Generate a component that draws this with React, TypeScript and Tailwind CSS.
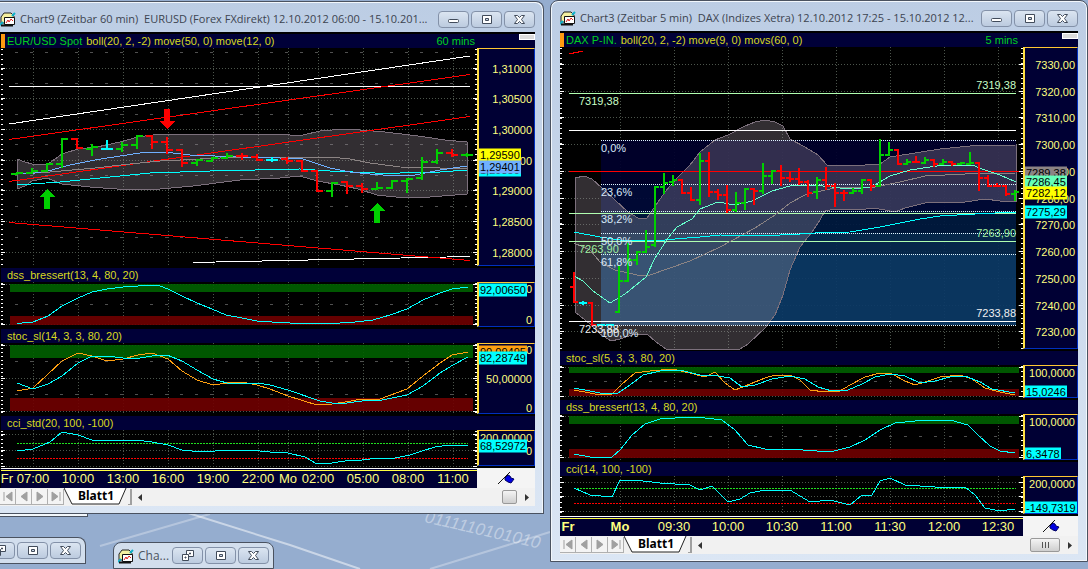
import React from 'react';

type Bar = [x: number, high: number, low: number, open: number, close: number, color: 'g' | 'r' | 'c'];
type AxisItem = { y: number; text: string; tag?: string };

const barColors = { g: '#00d000', r: '#ff0000', c: '#00ffff' };

const eurBars: Bar[] = [
  [17, 173, 175, 174, 173, 'g'], [32, 168, 174, 173, 171, 'g'], [47, 163, 171, 171, 164, 'g'],
  [62, 138, 168, 164, 139, 'g'], [77, 139, 149, 139, 148, 'r'], [92, 144, 156, 149, 147, 'g'],
  [107, 140, 150, 149, 149, 'c'], [122, 142, 152, 149, 145, 'g'], [137, 135, 149, 145, 136, 'g'],
  [152, 136, 149, 136, 142, 'r'], [167, 137, 154, 142, 150, 'r'], [182, 150, 167, 150, 163, 'r'],
  [197, 160, 166, 163, 160, 'g'], [212, 157, 162, 161, 158, 'g'], [227, 153, 159, 158, 156, 'g'],
  [242, 153, 160, 156, 156, 'r'], [257, 154, 161, 157, 160, 'r'], [272, 157, 162, 160, 160, 'c'],
  [287, 157, 164, 159, 161, 'r'], [302, 160, 171, 161, 171, 'r'], [317, 171, 191, 171, 191, 'r'],
  [332, 182, 197, 191, 183, 'g'], [347, 182, 194, 182, 186, 'r'], [362, 183, 193, 186, 189, 'r'],
  [377, 182, 190, 189, 188, 'g'], [392, 181, 188, 188, 181, 'g'], [407, 179, 193, 181, 179, 'g'],
  [422, 157, 180, 178, 162, 'g'], [437, 149, 164, 162, 153, 'g'], [452, 149, 157, 153, 155, 'r'],
  [467, 153, 157, 155, 155, 'g'],
];

const daxBars: Bar[] = [
  [574, 272, 302, 287, 302, 'r'], [583, 301, 305, 303, 303, 'c'], [592, 302, 325, 303, 325, 'r'],
  [601, 324, 326, 325, 325, 'c'], [610, 324, 326, 325, 325, 'c'], [619, 265, 313, 312, 281, 'g'],
  [628, 243, 281, 281, 260, 'g'], [637, 251, 265, 260, 252, 'g'], [646, 230, 252, 252, 247, 'g'],
  [655, 186, 247, 245, 187, 'g'], [664, 173, 194, 187, 183, 'g'], [673, 175, 186, 182, 180, 'g'],
  [682, 180, 193, 180, 193, 'r'], [691, 187, 201, 193, 200, 'r'], [700, 153, 205, 200, 161, 'g'],
  [709, 152, 197, 161, 192, 'r'], [718, 189, 200, 192, 195, 'r'], [727, 185, 213, 195, 210, 'r'],
  [736, 192, 212, 210, 203, 'g'], [745, 188, 210, 203, 189, 'g'], [754, 188, 205, 189, 191, 'r'],
  [763, 163, 194, 191, 176, 'g'], [772, 170, 184, 176, 171, 'g'], [781, 165, 186, 171, 178, 'r'],
  [790, 172, 182, 178, 179, 'r'], [799, 168, 185, 179, 182, 'r'], [808, 180, 197, 182, 193, 'r'],
  [817, 177, 199, 192, 180, 'g'], [826, 167, 190, 180, 186, 'r'], [835, 183, 207, 186, 193, 'r'],
  [844, 190, 201, 193, 193, 'r'], [853, 188, 194, 193, 191, 'g'], [862, 180, 194, 191, 180, 'g'],
  [871, 179, 191, 180, 186, 'r'], [880, 139, 186, 186, 155, 'g'], [889, 142, 156, 155, 150, 'g'],
  [898, 150, 165, 150, 164, 'r'], [907, 159, 165, 164, 162, 'g'], [916, 156, 163, 162, 162, 'r'],
  [925, 157, 164, 163, 160, 'g'], [934, 159, 167, 160, 164, 'r'], [943, 159, 165, 164, 162, 'g'],
  [952, 161, 166, 162, 164, 'r'], [961, 162, 165, 164, 163, 'g'], [970, 152, 165, 164, 163, 'g'],
  [979, 162, 191, 163, 178, 'r'], [988, 175, 186, 178, 186, 'r'], [997, 183, 187, 186, 186, 'r'],
  [1006, 185, 196, 186, 194, 'r'], [1015, 190, 201, 194, 192, 'g'],
];

const eurHours = [33, 78, 123, 168, 213, 258, 288, 318, 363, 408, 453];
const daxHours = [620, 674, 728, 782, 836, 890, 944, 998];

const eurTimes = [
  { x: 7, text: 'Fr' }, { x: 33, text: '07:00' }, { x: 78, text: '10:00' }, { x: 123, text: '13:00' },
  { x: 168, text: '16:00' }, { x: 213, text: '19:00' }, { x: 258, text: '22:00' }, { x: 288, text: 'Mo' },
  { x: 318, text: '02:00' }, { x: 363, text: '05:00' }, { x: 408, text: '08:00' }, { x: 453, text: '11:00' },
];

const daxTimes = [
  { x: 568, text: 'Fr', bold: true }, { x: 620, text: 'Mo', bold: true }, { x: 674, text: '09:30' },
  { x: 728, text: '10:00' }, { x: 782, text: '10:30' }, { x: 836, text: '11:00' },
  { x: 890, text: '11:30' }, { x: 944, text: '12:00' }, { x: 998, text: '12:30' },
];

const fibs = [
  { y: 140, h: 44, fill: '#00002c' }, { y: 184, h: 27, fill: '#000a38' }, { y: 211, h: 22, fill: '#001a40' },
  { y: 233, h: 21, fill: '#062a50' }, { y: 254, h: 71, fill: '#0b3966' },
];

type PlotProps = {
  x: number; y: number; w: number; h: number;
  cols: number[]; rows: number[]; minor?: number[]; step?: number;
  children: React.ReactNode;
};

function Plot({ x, y, w, h, cols, rows, minor = [], step = 5, children }: PlotProps) {
  const bottom = y + h - 2;
  return (
    <svg
      viewBox={`${x} ${y} ${w} ${h}`}
      height={h}
      preserveAspectRatio="none"
      shapeRendering="crispEdges"
      fill="none"
      className="block w-0 min-w-0 flex-1 bg-black [&_*]:[vector-effect:non-scaling-stroke]"
    >
      <g stroke="#4c554c" strokeDasharray="1 2">
        {cols.map((c) => <line key={c} x1={c + 0.5} x2={c + 0.5} y1={y} y2={bottom} />)}
        {rows.map((r) => <line key={r} x1={x + 5} x2={x + w - 4} y1={r + 0.5} y2={r + 0.5} />)}
      </g>
      {minor.map((r) => (
        <line key={r} x1={x + 14} x2={x + w - 10} y1={r + 0.5} y2={r + 0.5} stroke="#505050" strokeDasharray="3 12" />
      ))}
      {children}
      <g stroke="#ffffff">
        <line x1={x + 1} x2={x + 1} y1={y + 1} y2={bottom} strokeWidth="2" strokeDasharray={`1 ${step - 1}`} />
        <line x1={x + w - 1} x2={x + w - 1} y1={y + 1} y2={bottom} strokeWidth="2" strokeDasharray={`1 ${step - 1}`} />
        {rows.map((r) => (
          <path key={r} d={`M${x} ${r + 0.5}h4M${x + w - 4} ${r + 0.5}h4`} />
        ))}
      </g>
    </svg>
  );
}

function Curve({ points, color }: { points: string; color: string }) {
  return <polyline points={points} stroke={color} />;
}

function Bars({ bars, tick }: { bars: Bar[]; tick: number }) {
  return (
    <g strokeWidth="2">
      {bars.map(([x, high, low, open, close, color]) => (
        <path key={x} d={`M${x} ${high}V${low}M${x - tick} ${open}H${x + 1}M${x - 1} ${close}H${x + tick}`} stroke={barColors[color]} />
      ))}
    </g>
  );
}

function Axis({ y, items, className }: { y: number; items: AxisItem[]; className: string }) {
  return (
    <div className={`shrink-0 bg-black pb-0.5 ${className}`}>
      <div className="relative h-full overflow-hidden border-t border-r border-b border-l-2 border-t-[#ffc832] border-r-[#0030c0] border-b-[#0030c0] border-l-[#ffe040] bg-[#000034] font-['Liberation_Sans',sans-serif] text-[11px] leading-[13px] text-[#ffff80]">
        {items.map((item) => (
          <span
            key={item.y}
            style={{ top: item.y - y - 1 }}
            className={`absolute -translate-y-1/2 ${item.tag ? `left-0 px-px text-black ${item.tag}` : 'right-0.5'}`}
          >
            {item.text}
          </span>
        ))}
      </div>
    </div>
  );
}

function IndicatorTitle({ children }: { children: React.ReactNode }) {
  return (
    <h3 className="h-[14px] bg-[#000038] pl-1.5 font-['Liberation_Sans',sans-serif] text-[11px] leading-[14px] whitespace-pre text-[#d8d820]">
      {children}
    </h3>
  );
}

function ChartHeader({ name, studies, span }: { name: string; studies: string; span: string }) {
  return (
    <div className="flex h-[14px] items-start bg-[#000038] font-['Liberation_Sans',sans-serif] text-[11px] leading-[14px]">
      <span className="mr-0.5 h-full w-1 bg-[#ff9a10]" />
      <span className="mr-1 text-[#00d020]">{name}</span>
      <span className="flex-1 truncate text-[#d8d820]">{studies}</span>
      <span className="mr-11 text-[#00d020]">{span}</span>
      <button aria-label="Leiste" className="h-1.5 w-4 border border-white bg-[#dcdcdc]" />
    </div>
  );
}

function AppIcon() {
  return (
    <svg width="16" height="16" viewBox="0 0 16 16" className="shrink-0">
      <path d="M1 12V6l3-4h7l3 3v7Z" fill="#f4f0a0" stroke="#222" />
      <path d="M0 14 3 11M12 5l3-3" stroke="#10b0c8" strokeWidth="2" />
      <path d="M4.500 6.500h10v7h-10Z" fill="#fff" stroke="#111" />
      <path d="m6 12 2-3 1 2 2-3 2 2" fill="none" stroke="#e02020" />
      <path d="M1 14.500h12" stroke="#111" strokeWidth="2" />
    </svg>
  );
}

function CaptionButton({ kind }: { kind: 'Minimieren' | 'Maximieren' | 'Wiederherstellen' | 'Schließen' }) {
  return (
    <button
      aria-label={kind}
      className="flex h-[17px] w-[31px] shrink-0 items-center justify-center rounded-sm border border-[#8391a8] bg-linear-to-b from-[#dbe5f1] to-[#bccbdf]"
    >
      <svg width="13" height="11" viewBox="0 0 13 11" fill="#fff" stroke="#414b5a">
        {kind === 'Minimieren' && <rect x="1.500" y="5.500" width="10" height="3" rx="1" />}
        {kind === 'Maximieren' && <path d="M2.500 1.500h9v8h-9ZM5.500 4.500h3v2h-3Z" fillRule="evenodd" />}
        {kind === 'Wiederherstellen' && (
          <>
            <path d="M5.500.5h7v6h-7ZM8.500 3h1v1h-1Z" fillRule="evenodd" />
            <path d="M1.500 4.500h6v6h-6ZM4 7h1v1H4Z" fillRule="evenodd" />
          </>
        )}
        {kind === 'Schließen' && <path d="M1.500 1.500h3l2 2 2-2h3L8.500 5.500l3 4h-3l-2-2-2 2h-3l3-4Z" />}
      </svg>
    </button>
  );
}

function TitleBar({ title }: { title: string }) {
  return (
    <header className="flex h-[30px] items-center gap-0.5 pt-1">
      <AppIcon />
      <h2 className="min-w-0 flex-1 truncate pl-0.5 font-['Open_Sans','Noto_Sans',sans-serif] text-[11px] leading-4 whitespace-pre text-[#3c4450]">
        {title}
      </h2>
      <CaptionButton kind="Minimieren" />
      <CaptionButton kind="Maximieren" />
      <CaptionButton kind="Schließen" />
    </header>
  );
}

function TimeAxis({ x, w, times, className }: { x: number; w: number; times: { x: number; text: string; bold?: boolean }[]; className: string }) {
  return (
    <div className="flex h-5 bg-[#f4f4f4]">
      <div className="relative flex-1 border-t border-white bg-[#000034] font-['Liberation_Sans',sans-serif] text-[13px] leading-4 text-[#ffff80]">
        <div className="mt-px h-px bg-[#ffff40]" />
        {times.map((t) => (
          <span
            key={t.text}
            style={{ left: `${((t.x - x) / w) * 100}%` }}
            className={t.bold ? 'absolute top-0.5 -translate-x-1/2 font-bold' : 'absolute top-0.5 -translate-x-1/2'}
          >
            {t.text}
          </span>
        ))}
      </div>
      <div className={`flex shrink-0 items-center justify-center ${className}`}>
        <svg width="18" height="14" viewBox="0 0 18 14">
          <path d="M1 13 13 1" stroke="#111" />
          <path d="m8 7 3-3 2 1 1 2 3 1-3 4-3-1-3-2Z" fill="#0000e0" stroke="#000060" />
        </svg>
      </div>
    </div>
  );
}

const navIcons = [
  { label: 'Erstes Blatt', d: 'M3 2v9M11 2v9L5 6.500Z' },
  { label: 'Vorheriges Blatt', d: 'M10 2v9L4 6.500Z' },
  { label: 'Nächstes Blatt', d: 'M4 2v9l6-4.500Z' },
  { label: 'Letztes Blatt', d: 'M3 2v9l6-4.500ZM11 2v9' },
];

function SheetTabs({ grip }: { grip?: boolean }) {
  return (
    <nav className="flex h-[18px] items-center bg-[#f1f1f1]">
      {navIcons.map((n) => (
        <button key={n.label} aria-label={n.label} className="flex h-4 w-4 items-center justify-center border-r border-b border-[#b0b0b0] bg-[#f4f4f4]">
          <svg width="14" height="13" viewBox="0 0 14 13" fill="#a0a0a0" stroke="#a0a0a0">
            <path d={n.d} />
          </svg>
        </button>
      ))}
      <button className="relative flex h-full w-[64px] items-start justify-center font-['Noto_Sans','Open_Sans',sans-serif] text-[12px] leading-4 font-bold text-black">
        <svg width="64" height="18" viewBox="0 0 64 18" className="absolute inset-0">
          <path d="M0 0 8 16H55L62 0" fill="#fff" stroke="#222" />
        </svg>
        <span className="relative">Blatt1</span>
      </button>
      <span className="h-4 w-1 border-r-2 border-b border-[#a0a0a0]" />
      <svg width="8" height="9" viewBox="0 0 8 9" className="ml-1"><path d="M6 1v7L2 4.500Z" fill="#333" /></svg>
      <div className="flex flex-1 justify-end">
        <div className={grip
          ? 'flex h-[14px] w-[30px] items-center justify-center gap-0.5 rounded-xs border border-[#999] bg-linear-to-b from-[#f4f4f4] to-[#cfcfcf]'
          : 'h-[14px] w-[15px] rounded-xs border border-[#999] bg-linear-to-b from-[#f4f4f4] to-[#cfcfcf]'}
        >
          {grip && [0, 1, 2].map((i) => <span key={i} className="h-1.5 w-px bg-[#555]" />)}
        </div>
      </div>
      <svg width="8" height="9" viewBox="0 0 8 9" className="mr-1 ml-1.5"><path d="M2 1v7l4-3.500Z" fill="#333" /></svg>
    </nav>
  );
}

const band = { fill: '#a498a6', fillOpacity: 0.3, stroke: '#7c707c' };

function EurUsdWindow() {
  const x = 1;
  const w = 476;
  return (
    <section className="mt-px w-1/2 rounded-tr-lg border-t border-r border-b border-[#4a5260] bg-linear-to-b from-[#bccde4] to-[#dbe6f4] pr-2 pb-[7px] shadow-[inset_-1px_1px_0_#f2f7fc]">
      <TitleBar title={'Chart9 (Zeitbar 60 min)  EURUSD (Forex FXdirekt) 12.10.2012 06:00 - 15.10.201...'} />
      <div className="border-t-2 border-l border-black bg-black">
        <ChartHeader name="EUR/USD Spot" studies="boll(20, 2, -2) move(50, 0) move(12, 0)" span="60 mins" />
        <div className="flex">
          <Plot x={x} y={48} w={w} h={220} cols={eurHours} rows={[68, 98, 129, 160, 190, 221, 252]} minor={[52, 83, 114, 144, 175, 206, 237]}>
            <polygon
              {...band}
              points="17,159 25,162 32,164 48,164 62,154 78,149 97,147 120,142 138,137 160,134 280,134 290,135 303,135 320,131 345,129 360,130 385,132 410,135 425,137 445,140 467,142 467,194 430,197 405,198 377,195 358,189 340,185 317,181 300,176 280,178 240,180 193,186 160,189 130,190 90,187 62,184 47,178 32,181 25,186 17,189"
            />
            <path d="M9 86.500H470M9 124 470 56M193 262.500 470 256.500" stroke="#fff" />
            <path d="M9 139.500 470 74.500M9 181.500 470 116.500M9 222.500 470 260.500" stroke="#f00" />
            <Curve color="#8c8484" points="17,174 50,172 95,168 130,164 160,161 200,159 240,157 330,157 350,159 370,163 400,167 440,168 467,168" />
            <Curve color="#00ffff" points="17,185 60,182 100,178 150,173 210,171 300,169 330,171 375,173 400,173 425,172 440,172 467,170" />
            <Curve color="#6fb0ff" points="17,174 35,173 48,171 70,165 95,160 120,156 140,153 165,152 190,155 240,157 280,158 300,158 315,163 330,168 350,172 370,174 395,176 415,175 440,170 467,166" />
            <Bars bars={eurBars} tick={6} />
            <path d="M164 109h6v12h5l-8 8-8-8h5Z" fill="#f00" />
            <path d="M47 189l8 8h-5v12h-6v-12h-5ZM377 203l8 8h-5v12h-6v-12h-5Z" fill="#00d000" />
          </Plot>
          <Axis
            y={48}
            className="w-[58px]"
            items={[
              { y: 69, text: '1,31000' }, { y: 99, text: '1,30500' }, { y: 130, text: '1,30000' },
              { y: 161, text: '1,29500' }, { y: 191, text: '1,29000' }, { y: 222, text: '1,28500' },
              { y: 253, text: '1,28000' }, { y: 170, text: '1,29350', tag: 'bg-[#00ffff]' },
              { y: 155, text: '1,29590', tag: 'bg-[#ffff00]' }, { y: 167, text: '1,29401', tag: 'bg-[#6fb0ff]' },
            ]}
          />
        </div>
        <IndicatorTitle>dss_bressert(13, 4, 80, 20)</IndicatorTitle>
        <div className="flex">
          <Plot x={x} y={282} w={w} h={47} cols={eurHours} rows={[284, 324]} minor={[304]} step={4}>
            <path d="M10 284h463v8H10Z" fill="#006000" fillOpacity="0.9" />
            <path d="M10 316h463v9H10Z" fill="#700000" fillOpacity="0.9" />
            <Curve color="#00ffff" points="17,323.500 33,322 48,316 62,306 78,298 92,292 107,289 123,287 138,286 152,285 160,286 168,289 182,296 197,303 212,309 226,315 242,318 257,321 272,322 290,323 320,324 340,323 355,322 373,320 390,315 407,309 423,300 440,293 452,289 468,287" />
          </Plot>
          <Axis
            y={282}
            className="w-[58px]"
            items={[{ y: 289, text: '100,00000' }, { y: 320, text: '0' }, { y: 290, text: '92,00650', tag: 'bg-[#00ffff]' }]}
          />
        </div>
        <IndicatorTitle>stoc_sl(14, 3, 3, 80, 20)</IndicatorTitle>
        <div className="flex">
          <Plot x={x} y={343} w={w} h={73} cols={eurHours} rows={[345, 378, 411]} minor={[361, 394]} step={4}>
            <path d="M10 345h463v13H10Z" fill="#006000" fillOpacity="0.9" />
            <path d="M10 398h463v13H10Z" fill="#700000" fillOpacity="0.9" />
            <Curve color="#ffa010" points="17,391 33,388 62,361 78,353 92,356 107,361 123,359 138,355 152,353 160,356 168,359 182,371 197,380 213,385 227,383 242,382 257,385 270,389 288,396 317,405 332,404 345,402 362,399 380,399 407,389 423,376 440,363 452,355 468,352" />
            <Curve color="#00ffff" points="17,383 33,389 48,384 62,376 78,363 92,356 107,356 123,358 140,358 152,356 167,355 182,361 197,370 213,379 227,383 257,383 270,385 288,390 320,401 332,403 347,403 362,401 382,400 407,395 423,386 440,373 453,365 468,357" />
          </Plot>
          <Axis
            y={343}
            className="w-[58px]"
            items={[
              { y: 350, text: '100,00000' }, { y: 379, text: '50,00000' }, { y: 408, text: '0' },
              { y: 352, text: '90,09495', tag: 'bg-[#ffa010]' }, { y: 358, text: '82,28749', tag: 'bg-[#00ffff]' },
            ]}
          />
        </div>
        <IndicatorTitle>cci_std(20, 100, -100)</IndicatorTitle>
        <div className="flex">
          <Plot x={x} y={430} w={w} h={38} cols={eurHours} rows={[434, 450, 466]} step={4}>
            <path d="M17 443.500H468" stroke="#20e020" strokeDasharray="2 1" />
            <path d="M17 458.500H468" stroke="#f00" strokeDasharray="2 1" />
            <Curve color="#00ffff" points="17,451 33,449 50,442 62,432 78,435 92,440 112,440 122,441 135,440 152,442 168,445 182,450 192,451 215,451 225,450 250,450 270,452 288,453 305,457 317,464 332,463 345,461 362,460 378,458 395,458 410,455 422,451 435,447 450,445 468,445" />
          </Plot>
          <Axis
            y={430}
            className="w-[58px]"
            items={[{ y: 438, text: '200,00000' }, { y: 451, text: '0' }, { y: 446, text: '68,52972', tag: 'bg-[#00ffff]' }]}
          />
        </div>
        <TimeAxis x={x} w={w} times={eurTimes} className="w-[58px]" />
      </div>
      <SheetTabs />
    </section>
  );
}

// level captions drawn over the DAX plot
const levelLabels = [
  { y: 101, text: '7319,38', className: 'left-[19px] text-[#c8ffc8]' },
  { y: 85, text: '7319,38', className: 'right-[7px] text-[#c8ffc8]' },
  { y: 148, text: '0,0%', className: 'left-[41px] text-[#d8e8f8]' },
  { y: 192, text: '23,6%', className: 'left-[41px] text-[#d8e8f8]' },
  { y: 219, text: '38,2%', className: 'left-[41px] text-[#d8e8f8]' },
  { y: 241, text: '50,0%', className: 'left-[41px] text-[#d8e8f8]' },
  { y: 262, text: '61,8%', className: 'left-[41px] text-[#d8e8f8]' },
  { y: 333, text: '100,0%', className: 'left-[41px] text-[#d8e8f8]' },
  { y: 249, text: '7263,90', className: 'left-[19px] text-[#a0f0a0]' },
  { y: 233, text: '7263,90', className: 'right-[7px] text-[#a0f0a0]' },
  { y: 329, text: '7233,88', className: 'left-[19px] text-[#f0f0f0]' },
  { y: 313, text: '7233,88', className: 'right-[7px] text-[#f0f0f0]' },
];

function DaxWindow() {
  const x = 560;
  const w = 463;
  return (
    <section className="ml-1.5 min-w-0 flex-1 rounded-t-lg border border-[#4a5260] bg-linear-to-b from-[#bccde4] to-[#dbe6f4] px-[9px] pb-[7px] shadow-[inset_0_0_0_1px_#f2f7fc]">
      <TitleBar title={'Chart3 (Zeitbar 5 min)  DAX (Indizes Xetra) 12.10.2012 17:25 - 15.10.2012 12...'} />
      <div className="border-t-2 border-black bg-black">
        <ChartHeader name="DAX P-IN." studies="boll(20, 2, -2) move(9, 0) movs(60, 0)" span="5 mins" />
        <div className="flex">
          <div className="relative flex min-w-0 flex-1">
            <Plot x={x} y={47} w={w} h={304} cols={daxHours} rows={[64, 91, 117, 144, 171, 198, 224, 251, 278, 305, 331]}>
              {fibs.map((f) => <rect key={f.y} x="601" y={f.y} width="415" height={f.h} fill={f.fill} fillOpacity="0.92" />)}
              <polygon
                {...band}
                points="575,178 584,176 592,179 602,188 615,200 628,212 638,218 647,218 656,205 665,192 677,178 690,165 700,152 715,140 728,135 745,126 755,122 765,120 775,122 783,126 790,139 805,147 818,155 827,165 850,166 880,164 890,157 915,153 940,149 970,146 1016,145 1016,201 1000,201 985,199 965,202 940,202 925,203 905,208 895,212 885,210 872,208 860,210 835,209 825,211 820,220 812,232 800,247 790,270 783,295 775,315 765,328 748,344 740,349 666,349 656,342 647,334 635,334 620,339 611,341 600,334 590,324 575,312"
              />
              <path d="M569 93.500H1016M569 213.500H1016M569 241.500H1016" stroke="#b0ffb0" />
              <path d="M569 130.500H1016M569 321.500H1016" stroke="#fff" />
              <path d="M601 140.500H1016M601 184.500H1016M601 211.500H1016M601 233.500H1016M601 254.500H1016M601 325.500H1016" stroke="#e0f4ff" strokeDasharray="1 1" />
              <path d="M569 171.500H1019M569 53.500l5 0M573 52.500h6M578 51.500h5" stroke="#f00" />
              <Curve color="#8c8484" points="574,243 590,250 600,262 615,270 637,275 650,275 670,268 690,261 720,247 755,228 775,215 790,203 805,195 825,190 840,187 875,187 900,182 925,176 965,174 1016,173" />
              <Curve color="#00ffff" points="574,232 600,237 620,240 655,241 675,239 700,237 720,235 760,236 800,234 815,233 850,232 880,227 920,219 940,216 975,214 1016,212" />
              <Curve color="#66ffcc" points="574,276 583,281 593,291 610,303 625,294 646,277 655,258 668,238 677,227 692,219 700,209 718,202 735,205 752,201 772,191 790,186 815,185 840,188 855,189 870,187 875,185 890,176 910,170 930,167 945,165 972,165 985,170 1000,175 1016,182" />
              <Bars bars={daxBars} tick={4} />
            </Plot>
            {levelLabels.map((l) => (
              <span
                key={l.y}
                style={{ top: l.y - 47 }}
                className={`absolute -translate-y-1/2 font-['Liberation_Sans',sans-serif] text-[11px] leading-3 ${l.className}`}
              >
                {l.text}
              </span>
            ))}
          </div>
          <Axis
            y={47}
            className="w-[55px]"
            items={[
              { y: 65, text: '7330,00' }, { y: 92, text: '7320,00' }, { y: 118, text: '7310,00' },
              { y: 145, text: '7300,00' }, { y: 172, text: '7290,00' }, { y: 199, text: '7280,00' },
              { y: 225, text: '7270,00' }, { y: 252, text: '7260,00' }, { y: 279, text: '7250,00' },
              { y: 306, text: '7240,00' }, { y: 332, text: '7230,00' },
              { y: 173, text: '7289,38', tag: 'bg-[#8c8484]' }, { y: 182, text: '7286,45', tag: 'bg-[#66ffb8]' },
              { y: 193, text: '7282,12', tag: 'bg-[#ffff00]' }, { y: 212, text: '7275,29', tag: 'bg-[#00ffff]' },
            ]}
          />
        </div>
        <IndicatorTitle>stoc_sl(5, 3, 3, 80, 20)</IndicatorTitle>
        <div className="flex">
          <Plot x={x} y={365} w={w} h={35} cols={daxHours} rows={[367, 396]} minor={[381]}>
            <path d="M569 367h450v6H569Z" fill="#006000" fillOpacity="0.9" />
            <path d="M569 389h450v7H569Z" fill="#700000" fillOpacity="0.9" />
            <Curve color="#ffa010" points="574,390 590,393 600,395 612,394 622,384 635,373 650,371 672,369 690,373 705,377 715,372 725,383 735,390 745,386 765,378 775,375 790,375 800,380 810,390 825,392 840,391 850,385 865,377 880,373 892,374 905,381 915,385 925,382 940,377 960,375 972,379 985,388 1000,392 1015,395" />
            <Curve color="#00ffff" points="574,388 590,391 605,394 618,393 630,385 643,375 660,371 680,370 700,375 718,376 730,378 742,387 755,385 772,379 790,376 805,379 818,387 832,391 848,390 862,384 875,377 890,374 905,376 920,383 935,381 950,377 965,376 980,382 992,389 1015,393" />
          </Plot>
          <Axis y={365} className="w-[55px]" items={[{ y: 373, text: '100,0000' }, { y: 392, text: '15,0246', tag: 'bg-[#00ffff]' }]} />
        </div>
        <IndicatorTitle>dss_bressert(13, 4, 80, 20)</IndicatorTitle>
        <div className="flex">
          <Plot x={x} y={414} w={w} h={48} cols={daxHours} rows={[416, 457]} minor={[436]}>
            <path d="M569 416h450v8H569Z" fill="#006000" fillOpacity="0.9" />
            <path d="M569 449h450v9H569Z" fill="#700000" fillOpacity="0.9" />
            <Curve color="#00ffff" points="574,454 590,457 612,457 620,450 632,435 645,424 660,419 690,417 705,418 722,420 735,430 748,445 765,449 790,449 830,452 850,447 865,440 880,430 895,423 925,420 950,420 968,425 978,435 990,446 1000,451 1015,453" />
          </Plot>
          <Axis y={414} className="w-[55px]" items={[{ y: 422, text: '100,0000' }, { y: 454, text: '6,3478', tag: 'bg-[#00ffff]' }]} />
        </div>
        <IndicatorTitle>cci(14, 100, -100)</IndicatorTitle>
        <div className="flex">
          <Plot x={x} y={476} w={w} h={40} cols={daxHours} rows={[482, 496, 511]}>
            <path d="M574 488.500H1016" stroke="#20e020" strokeDasharray="2 1" />
            <path d="M574 503.500H1016" stroke="#f00" strokeDasharray="2 1" />
            <Curve color="#00ffff" points="574,488 590,495 612,497 620,480 635,480 660,483 690,485 700,490 712,486 728,502 740,499 750,493 765,490 790,490 810,502 830,500 850,505 862,495 872,495 880,481 890,478 905,485 935,487 965,487 975,495 985,508 1000,511 1015,509" />
          </Plot>
          <Axis y={476} className="w-[55px]" items={[{ y: 484, text: '200,0000' }, { y: 508, text: '-149,7319', tag: 'bg-[#00ffff]' }]} />
        </div>
        <TimeAxis x={x} w={w} times={daxTimes} className="w-[55px]" />
      </div>
      <SheetTabs grip />
    </section>
  );
}

function Wallpaper() {
  return (
    <svg className="absolute inset-0 h-full w-full" fill="none" stroke="#fff" aria-hidden="true">
      <path d="M185 512 290 545 360 569" strokeOpacity="0.5" strokeWidth="2" />
      <path d="M100 546 210 514M430 569 550 532" strokeOpacity="0.3" strokeWidth="2" />
      <g fill="#fff" fillOpacity="0.4" stroke="none" fontFamily="Liberation Sans" fontStyle="italic" fontSize="17">
        <text x="424" y="522" transform="rotate(13 424 522)">0111110101010</text>
      </g>
    </svg>
  );
}

export default function App() {
  return (
    <main className="relative min-h-screen overflow-hidden bg-[#95adcf]">
      <Wallpaper />
      <div className="relative flex items-start">
        <EurUsdWindow />
        <DaxWindow />
      </div>

      {/* minimised windows along the bottom of the desktop */}
      <div className="absolute top-[514px] left-0 h-[3px] w-[88px] border-r border-b border-[#4a5260] bg-[#f2f7fc]" />
      <div className="absolute top-[537px] left-0 flex h-[27px] items-center gap-0.5 overflow-hidden rounded-tr-lg border border-l-0 border-[#4a5260] bg-[#d2deed] pr-1">
        <div className="-ml-4 flex gap-0.5">
          <CaptionButton kind="Wiederherstellen" />
          <CaptionButton kind="Maximieren" />
          <CaptionButton kind="Schließen" />
        </div>
      </div>
      <div className="absolute top-[542px] left-[113px] flex h-[27px] items-center gap-0.5 rounded-t-lg border border-[#4a5260] bg-[#d2deed] px-1">
        <AppIcon />
        <h2 className="w-[34px] pl-0.5 font-['Open_Sans','Noto_Sans',sans-serif] text-[12px] leading-4 text-[#4c5460]">Cha...</h2>
        <CaptionButton kind="Wiederherstellen" />
        <CaptionButton kind="Maximieren" />
        <CaptionButton kind="Schließen" />
      </div>
    </main>
  );
}
